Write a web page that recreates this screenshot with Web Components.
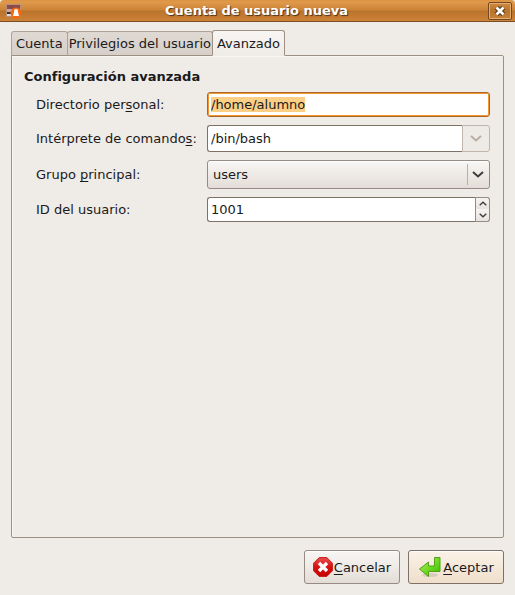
<!DOCTYPE html>
<html lang="es">
<head>
<meta charset="utf-8">
<title>Cuenta de usuario nueva</title>
<style>
    body {
        margin: 0;
        background: #efebe7;
        color: #1a1a1a;
        font: 13px/17px "DejaVu Sans", sans-serif;
    }
</style>
</head>
<body>
<app-dialog>
    <title-bar slot="title">Cuenta de usuario nueva</title-bar>
    <tab-panel>
        <tab-item slot="tab">Cuenta</tab-item>
        <tab-item slot="tab" compact>Privilegios del usuario</tab-item>
        <tab-item slot="tab" active>Avanzado</tab-item>
        <form-section heading="Configuración avanzada">
            <text-field label="Directorio per_sonal:" value="/home/alumno" selected></text-field>
            <combo-field label="Intérprete de comando_s:" value="/bin/bash"></combo-field>
            <select-field label="Grupo _principal:" value="users"></select-field>
            <spin-field label="ID del usuario:" value="1001"></spin-field>
        </form-section>
    </tab-panel>
    <dialog-button slot="actions" label="_Cancelar">
        <svg width="20" height="20" viewBox="0 0 20 20">
            <defs><linearGradient id="r" x2="0" y2="1"><stop stop-color="#e85050"/><stop offset=".5" stop-color="#d91010"/><stop offset="1" stop-color="#c40000"/></linearGradient></defs>
            <path d="M6.2.6h7.6l5.6 5.6v7.6l-5.6 5.6H6.2L.6 13.800V6.200z" fill="url(#r)" stroke="#c81818"/>
            <path d="M6 6l8 8M14 6l-8 8" stroke="#fff" stroke-width="3.400"/>
        </svg>
    </dialog-button>
    <dialog-button slot="actions" label="_Aceptar" default>
        <svg width="24" height="22" viewBox="0 0 24 22">
            <defs><linearGradient id="g" x2="1" y2="1"><stop stop-color="#b8f070"/><stop offset=".55" stop-color="#6cd820"/><stop offset="1" stop-color="#38b800"/></linearGradient></defs>
            <ellipse cx="12" cy="19" rx="8" ry="2" fill="#000" opacity=".1"/>
            <path d="M16.500 1.500h5.500V15.500H10.500v5L1.500 13l9-7v4h6z" fill="url(#g)" stroke="#4fa018"/>
        </svg>
    </dialog-button>
</app-dialog>

<script>
// "_" marks the letter that follows it as the keyboard mnemonic
function mnemonic(text) {
    return text.replace(/_(.)/, '<u>$1</u>');
}

const chevron = (dir, w, h) => `
    <svg class="chevron" width="${w}" height="${h}" viewBox="0 0 12 7" aria-hidden="true">
        <path d="${dir === 'up' ? 'M1 6L6 1.500L11 6' : 'M1 1L6 5.500L11 1'}" fill="none" stroke="currentColor" stroke-width="2"/>
    </svg>`;

class AppDialog extends HTMLElement {
    constructor() {
        super();
        this.attachShadow({ mode: 'open' }).innerHTML = `
            <style>
                :host {
                    display: flex;
                    flex-direction: column;
                    min-height: 100vh;
                }
                main {
                    flex: 1;
                    display: flex;
                    padding: 8px 11px 12px;
                }
                footer {
                    display: flex;
                    justify-content: flex-end;
                    gap: 8px;
                    padding: 0 11px 11px;
                }
            </style>
            <slot name="title"></slot>
            <main><slot></slot></main>
            <footer><slot name="actions"></slot></footer>
        `;
    }
}

class TitleBar extends HTMLElement {
    constructor() {
        super();
        this.attachShadow({ mode: 'open' }).innerHTML = `
            <style>
                :host {
                    display: grid;
                    grid-template-columns: 22px 1fr 24px;
                    align-items: center;
                    box-sizing: border-box;
                    height: 22px;
                    padding: 0 3px;
                    border-bottom: 1px solid #7b4f25;
                    border-radius: 4px 4px 0 0;
                    background: linear-gradient(#dc9240, #e09a4c 2px, #cd8337 10px, #b9732b 11px, #cd8337);
                }
                h1 {
                    margin: 0;
                    font-size: 13px;
                    line-height: 17px;
                    text-align: center;
                    color: #fff;
                    text-shadow: 1px 1px 1px #4a3018;
                }
                svg {
                    justify-self: center;
                }
                button {
                    display: grid;
                    place-items: center;
                    width: 24px;
                    height: 18px;
                    padding: 0;
                    border: 1px solid #744820;
                    border-radius: 2px;
                    background: linear-gradient(#cf8a42, #b9732b 50%, #cb8339);
                    box-shadow: inset 0 0 0 1px #e3ad74;
                }
            </style>
            <svg width="18" height="16" viewBox="0 0 18 16" aria-hidden="true">
                <path d="M1 1h15v13H1z" fill="#b98f7c"/>
                <path d="M2 2h13v4H2z" fill="#8c4a48"/>
                <path d="M2 6h13v3H2z" fill="#c9a99c"/>
                <path d="M2 9h5v2H2z" fill="#333"/>
                <path d="M2 11h6v2H2z" fill="#ddd"/>
                <circle cx="11" cy="10" r="5.500" fill="#f36a10"/>
                <circle cx="11" cy="8" r="2" fill="#fff"/>
                <path d="M8 13l1-4h4l1 4z" fill="#fff"/>
            </svg>
            <h1><slot></slot></h1>
            <button type="button" aria-label="Cerrar">
                <svg width="12" height="12" viewBox="0 0 12 12">
                    <path d="M2.500 2.500l7 7M9.500 2.500l-7 7" stroke="#603a18" stroke-width="5"/>
                    <path d="M2.500 2.500l7 7M9.500 2.500l-7 7" stroke="#fff" stroke-width="2.600"/>
                </svg>
            </button>
        `;
    }
}

class TabPanel extends HTMLElement {
    constructor() {
        super();
        this.attachShadow({ mode: 'open' }).innerHTML = `
            <style>
                :host {
                    flex: 1;
                    display: flex;
                    flex-direction: column;
                }
                nav {
                    display: flex;
                    align-items: flex-end;
                    z-index: 1;
                }
                section {
                    flex: 1;
                    margin-top: -1px;
                    padding: 12px 13px 12px 12px;
                    border: 1px solid #9c9083;
                    border-radius: 0 2px 2px 2px;
                    box-shadow: inset 1px 1px 0 #f8f6f4;
                }
            </style>
            <nav role="tablist"><slot name="tab"></slot></nav>
            <section role="tabpanel"><slot></slot></section>
        `;
    }
}

class TabItem extends HTMLElement {
    constructor() {
        super();
        this.attachShadow({ mode: 'open' }).innerHTML = `
            <style>
                :host {
                    display: block;
                    margin-right: -1px;
                }
                button {
                    display: block;
                    height: 25px;
                    padding: 0 4px;
                    border: 1px solid #b0a396;
                    border-bottom-color: #9c9083;
                    border-radius: 3px 3px 0 0;
                    background: linear-gradient(#dfd9d4, #d8cfc9);
                    color: inherit;
                    font: inherit;
                    white-space: nowrap;
                }
                :host([compact]) button {
                    padding: 0 1px;
                }
                :host([active]) {
                    z-index: 1;
                }
                :host([active]) button {
                    height: 26px;
                    border-color: #9c9083;
                    border-bottom-color: #efebe7;
                    background: linear-gradient(#f8f6f4, #efebe7);
                }
            </style>
            <button type="button" role="tab"><slot></slot></button>
        `;
    }

    connectedCallback() {
        this.shadowRoot.querySelector('button').setAttribute('aria-selected', this.hasAttribute('active'));
    }
}

class FormSection extends HTMLElement {
    connectedCallback() {
        this.attachShadow({ mode: 'open' }).innerHTML = `
            <style>
                :host {
                    display: block;
                }
                h2 {
                    margin: 0 0 7px;
                    font-size: 13px;
                    line-height: 17px;
                }
                .rows {
                    display: grid;
                    gap: 8px;
                    padding-left: 12px;
                }
            </style>
            <h2>${this.getAttribute('heading')}</h2>
            <div class="rows"><slot></slot></div>
        `;
    }
}

// Shared label + control row; subclasses supply the control itself
class FieldRow extends HTMLElement {
    connectedCallback() {
        this.attachShadow({ mode: 'open' }).innerHTML = `
            <style>
                :host {
                    display: grid;
                    grid-template-columns: 171px 1fr;
                    align-items: center;
                }
                u {
                    text-underline-offset: 2px;
                    text-decoration-skip-ink: none;
                }
                input, select, button {
                    box-sizing: border-box;
                    margin: 0;
                    color: inherit;
                    font: inherit;
                    outline: none;
                }
                input {
                    width: 100%;
                    min-width: 0;
                    height: 25px;
                    padding: 0 3px;
                    border: 1px solid #7d7265;
                    border-radius: 3px;
                    background: #fff;
                    appearance: textfield;
                }
                input::-webkit-inner-spin-button {
                    display: none;
                }
                input::selection {
                    background: #fbcf85;
                    color: #1a1a1a;
                }
                .group {
                    display: flex;
                }
                .group input {
                    flex: 1;
                    border-right: 0;
                    border-radius: 3px 0 0 3px;
                }
                button {
                    display: grid;
                    place-items: center;
                    padding: 0;
                    border: 1px solid #968c83;
                    background: linear-gradient(#f6f4f2, #e9e3de);
                }
                ${this.styles()}
            </style>
            <label for="control">${mnemonic(this.getAttribute('label'))}</label>
            ${this.control(this.getAttribute('value'))}
        `;
    }

    styles() {
        return '';
    }
}

class TextField extends FieldRow {
    connectedCallback() {
        super.connectedCallback();
        if (this.hasAttribute('selected')) {
            const input = this.shadowRoot.querySelector('input');
            input.focus();
            input.select();
        }
    }

    styles() {
        return `
            input:focus {
                border-color: #a8682a;
                box-shadow: inset 0 0 0 1px #f29430;
            }
        `;
    }

    control(value) {
        return `<input id="control" type="text" value="${value}">`;
    }
}

class ComboField extends FieldRow {
    styles() {
        return `
            input { height: 27px; }
            button {
                width: 28px;
                border-color: #c0b5ab;
                border-radius: 0 3px 3px 0;
                background: #eeeae6;
                color: #b9aea5;
            }
        `;
    }

    control(value) {
        return `
            <div class="group">
                <input id="control" type="text" value="${value}">
                <button type="button" aria-label="Mostrar opciones" disabled>${chevron('down', 12, 7)}</button>
            </div>
        `;
    }
}

class SelectField extends FieldRow {
    styles() {
        return `
            .box {
                display: grid;
                align-items: center;
            }
            select, .arrow { grid-area: 1 / 1; }
            select {
                width: 100%;
                height: 29px;
                padding: 0 28px 0 5px;
                border: 1px solid #968c83;
                border-radius: 3px;
                appearance: none;
                background: linear-gradient(#f8f6f4, #eeeae6 50%, #e4ddd7);
                box-shadow: inset 0 1px 0 #fff;
            }
            .arrow {
                justify-self: end;
                display: grid;
                place-items: center;
                width: 19px;
                height: 21px;
                margin-right: 3px;
                border-left: 1px solid #b8afa6;
                color: #3c3c3c;
                pointer-events: none;
            }
        `;
    }

    control(value) {
        return `
            <div class="box">
                <select id="control"><option>${value}</option></select>
                <span class="arrow">${chevron('down', 12, 7)}</span>
            </div>
        `;
    }
}

class SpinField extends FieldRow {
    connectedCallback() {
        super.connectedCallback();
        const input = this.shadowRoot.querySelector('input');
        const [up, down] = this.shadowRoot.querySelectorAll('button');
        up.addEventListener('click', () => input.stepUp());
        down.addEventListener('click', () => input.stepDown());
    }

    styles() {
        return `
            .steps {
                display: grid;
                grid-template-rows: 12px 13px;
                width: 15px;
                color: #3c3c3c;
            }
            button:first-child {
                border-bottom: 0;
                border-radius: 0 3px 0 0;
            }
            button:last-child {
                border-top: 0;
                border-radius: 0 0 3px 0;
            }
        `;
    }

    control(value) {
        return `
            <div class="group">
                <input id="control" type="number" value="${value}">
                <div class="steps">
                    <button type="button" aria-label="Aumentar">${chevron('up', 8, 5)}</button>
                    <button type="button" aria-label="Disminuir">${chevron('down', 8, 5)}</button>
                </div>
            </div>
        `;
    }
}

class DialogButton extends HTMLElement {
    connectedCallback() {
        this.attachShadow({ mode: 'open' }).innerHTML = `
            <style>
                :host {
                    display: block;
                }
                button {
                    display: flex;
                    align-items: center;
                    justify-content: center;
                    gap: 1px;
                    box-sizing: border-box;
                    width: 96px;
                    height: 34px;
                    padding: 0;
                    border: 1px solid #968c83;
                    border-radius: 3px;
                    background: linear-gradient(#f8f6f4, #eeeae6 50%, #e4ddd7);
                    box-shadow: inset 0 1px 0 #fff;
                    color: inherit;
                    font: inherit;
                }
                :host([default]) button {
                    border-color: #7d7265;
                    background: linear-gradient(#faf2e8, #f5e8d9 50%, #efdecb);
                }
                u {
                    text-underline-offset: 2px;
                }
                ::slotted(svg) {
                    display: block;
                }
            </style>
            <button type="button"><slot></slot><span>${mnemonic(this.getAttribute('label'))}</span></button>
        `;
    }
}

customElements.define('app-dialog', AppDialog);
customElements.define('title-bar', TitleBar);
customElements.define('tab-panel', TabPanel);
customElements.define('tab-item', TabItem);
customElements.define('form-section', FormSection);
customElements.define('text-field', TextField);
customElements.define('combo-field', ComboField);
customElements.define('select-field', SelectField);
customElements.define('spin-field', SpinField);
customElements.define('dialog-button', DialogButton);
</script>
</body>
</html>
